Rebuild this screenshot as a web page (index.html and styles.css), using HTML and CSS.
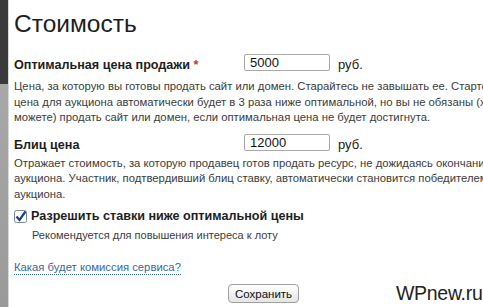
FILE: index.html
```html
<html>
<head>
    <link rel="stylesheet" href="styles.css">
</head>
<body>
    <div class="edge"></div>
    <div class="panel">
        <h1 class="title">Стоимость</h1>

        <div class="field first">
            <label class="label">Оптимальная цена продажи <span class="star">*</span></label>
            <input class="price" type="text" value="5000">
            <span class="unit">руб.</span>
        </div>
        <p class="hint">Цена, за которую вы готовы продать сайт или домен. Старайтесь не завышать ее. Стартовая<br>цена для аукциона автоматически будет в 3 раза ниже оптимальной, но вы не обязаны (хотя<br>можете) продать сайт или домен, если оптимальная цена не будет достигнута.</p>

        <div class="field second">
            <label class="label">Блиц цена</label>
            <input class="price" type="text" value="12000">
            <span class="unit">руб.</span>
        </div>
        <p class="hint tight">Отражает стоимость, за которую продавец готов продать ресурс, не дожидаясь окончания<br>аукциона. Участник, подтвердивший блиц ставку, автоматически становится победителем<br>аукциона.</p>

        <div class="check">
            <span class="box">
                <svg width="13" height="13" viewBox="0 0 13 13">
                    <rect x="0.5" y="0.5" width="12" height="12" rx="2" fill="#fff" stroke="#7a8a9a"/>
                    <path d="M2.5 6.5 L5.5 10 L11.5 1.5" fill="none" stroke="#1d3f8a" stroke-width="2.2"/>
                </svg>
            </span>
            <span class="check-label">Разрешить ставки ниже оптимальной цены</span>
        </div>
        <p class="check-hint">Рекомендуется для повышения интереса к лоту</p>

        <a class="link" href="#">Какая будет комиссия сервиса?</a>

        <div class="bottom">
            <button class="save" type="button">Сохранить</button>
            <span class="brand">WPnew.ru</span>
        </div>
    </div>
</body>
</html>
```

FILE: styles.css
```css
body {
    margin: 0;
    font-family: "Liberation Sans", Arial, sans-serif;
    background-color: #ffffff;
    display: flex;
    height: 307px;
    overflow: hidden;
}

.edge {
    width: 8px;
    flex-shrink: 0;
    background: linear-gradient(#3a3a3a 0, #3a3a3a 84px, #a8a8a8 84px, #9a9a9a 100%);
}

.panel {
    flex: 1;
    border-left: 1px solid #d8d8d8;
    padding: 0 0 0 5px;
    overflow: hidden;
    white-space: nowrap;
}

.title {
    margin: 9px 0 0 0;
    font-size: 24.5px;
    font-weight: normal;
    color: #1e1e1e;
    line-height: 30px;
}

.field {
    display: flex;
    align-items: flex-start;
    height: 20px;
}

.field.first {
    margin-top: 15px;
}

.field.second {
    margin-top: 8px;
}

.label {
    width: 230px;
    margin-top: 3px;
    font-size: 12.6px;
    line-height: 17px;
    font-weight: bold;
    color: #1e1e1e;
}

.star {
    color: #c0392b;
}

.price {
    width: 86px;
    height: 17px;
    box-sizing: border-box;
    border: 1px solid #a9a9a9;
    border-radius: 2px;
    padding: 0 5px;
    font-family: "Liberation Sans", Arial, sans-serif;
    font-size: 13px;
    color: #111;
}

.unit {
    margin: 2px 0 0 8px;
    font-size: 13px;
    line-height: 17px;
    color: #222;
}

.hint {
    margin: 5px 0 0 0;
    font-size: 11.3px;
    line-height: 15.5px;
    color: #3c3c3c;
}

.hint.tight {
    margin-top: 2px;
}

.check {
    display: flex;
    align-items: center;
    height: 14px;
    margin-top: 7px;
}

.box {
    display: flex;
    margin-right: 4px;
}

.check-label {
    font-size: 12.6px;
    font-weight: bold;
    color: #1e1e1e;
}

.check-hint {
    margin: 6px 0 0 18px;
    font-size: 11px;
    line-height: 13px;
    color: #3c3c3c;
}

.link {
    display: inline-block;
    margin-top: 18px;
    font-size: 11.3px;
    line-height: 14px;
    color: #3a6a9a;
    text-decoration: none;
    border-bottom: 1px dotted #3a6a9a;
}

.bottom {
    display: flex;
    align-items: center;
    margin-top: 7px;
}

.save {
    margin-left: 214px;
    width: 71px;
    height: 19px;
    padding: 0;
    font-family: "Liberation Sans", Arial, sans-serif;
    font-size: 11.5px;
    color: #111;
    background: linear-gradient(#ffffff, #e4e4e4);
    border: 1px solid #a0a0a0;
    border-radius: 4px;
}

.brand {
    margin-left: 97px;
    font-size: 19.5px;
    letter-spacing: -0.3px;
    color: #222;
}
```
